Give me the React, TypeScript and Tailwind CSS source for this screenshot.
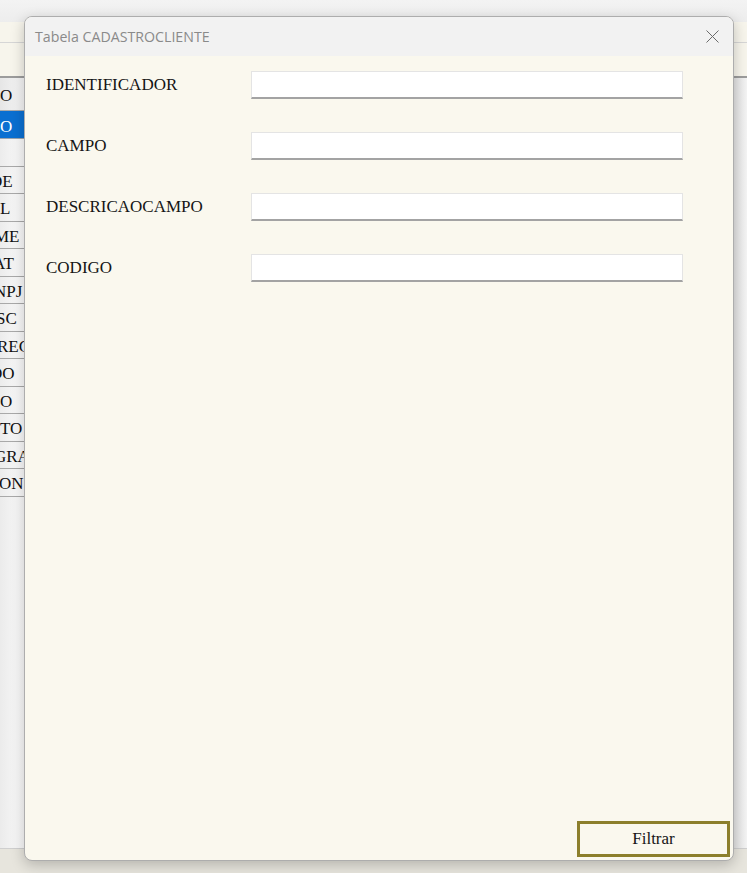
const fields = ["IDENTIFICADOR", "CAMPO", "DESCRICAOCAMPO", "CODIGO"];

// fragments of the grid behind the dialog, with how far each is pushed off the left edge
const sideRows = [
  { text: "DE", shift: "-ml-[10px]" },
  { text: "L", shift: "ml-0" },
  { text: "ME", shift: "-ml-[6px]" },
  { text: "AT", shift: "-ml-[7px]" },
  { text: "NPJ", shift: "-ml-[6px]" },
  { text: "SC", shift: "-ml-[4px]" },
  { text: "REC", shift: "-ml-[3px]" },
  { text: "DO", shift: "-ml-[10px]" },
  { text: "O", shift: "ml-0" },
  { text: "TO", shift: "ml-0" },
  { text: "GRA", shift: "-ml-[6px]" },
  { text: "ON", shift: "-ml-[1px]" },
];

const Cell: React.FC<{ text?: string; shift?: string; selected?: boolean }> = ({ text, shift, selected }) => (
  <div
    className={
      selected
        ? "flex h-[28px] shrink-0 items-center overflow-hidden border-b border-[#9aa3ad] bg-[#0a6fd1] pt-[3px] font-['Liberation_Serif',serif] text-[17px] leading-none text-white"
        : "flex h-[27.5px] shrink-0 items-center overflow-hidden border-b border-[#a9a9a9] bg-gradient-to-r from-[#ececec] to-[#fbfbfb] pt-[3px] font-['Liberation_Serif',serif] text-[17px] leading-none text-[#111]"
    }
  >
    <span className={`shrink-0 whitespace-nowrap ${shift ?? ""}`}>{text}</span>
  </div>
);

function Backdrop() {
  return (
    <div className="flex h-full w-full flex-col">
      <div className="h-[22px] shrink-0 bg-gradient-to-b from-[#f3f3f3] to-[#ededed]" />
      <div className="h-[21px] shrink-0 border-b border-[#d6d6d6] bg-[#f7f5ec]" />
      <div className="h-[35px] shrink-0 border-b-2 border-[#9c9c9c] bg-[#f7f5ec]" />
      <div className="flex min-h-0 flex-1">
        <div className="flex w-[24px] flex-col">
          <div className="flex h-[33px] shrink-0 items-center overflow-hidden border-b border-[#a9a9a9] bg-gradient-to-r from-[#e6e6e6] to-[#f6f6f6] pt-[3px] font-['Liberation_Serif',serif] text-[17px] leading-none text-[#111]">
            <span>O</span>
          </div>
          <Cell text="O" selected />
          <Cell />
          {sideRows.map((r) => (
            <Cell key={r.text + r.shift} text={r.text} shift={r.shift} />
          ))}
          <div className="flex-1 bg-gradient-to-r from-[#ebebeb] to-[#fafafa]" />
        </div>
        <div className="flex-1" />
        <div className="w-[13px] bg-gradient-to-r from-[#e2e2e2] to-[#f4f4f4]" />
      </div>
      <div className="h-[25px] shrink-0 border-t border-[#cfcfcf] bg-[#e7e5dd]" />
    </div>
  );
}

function FilterDialog() {
  return (
    <div className="absolute left-[24px] top-[16px] flex h-[845px] w-[710px] flex-col overflow-hidden rounded-[8px] border border-[#adadad] bg-[#faf8ee] shadow-[0_4px_14px_rgba(0,0,0,0.22)]">
      <div className="flex h-[39px] shrink-0 items-center justify-between bg-[#f2f2f2] pl-[10px] pr-[14px]">
        <span className="font-['Open_Sans',sans-serif] text-[14.2px] text-[#8a8a8a]">
          Tabela CADASTROCLIENTE
        </span>
        <svg width="13" height="13" viewBox="0 0 13 13" className="text-[#6b6b6b]">
          <path d="M0.5 0.5 L12.5 12.5 M12.5 0.5 L0.5 12.5" stroke="currentColor" strokeWidth="1" fill="none" />
        </svg>
      </div>
      <div className="flex flex-1 flex-col pl-[21px] pt-[15px]">
        <div className="flex flex-col gap-[33px]">
          {fields.map((f) => (
            <div key={f} className="flex h-[28px] items-center">
              <label className="-mt-[2px] w-[205px] font-['Liberation_Serif',serif] text-[17px] leading-none text-[#151515]">
                {f}
              </label>
              <input
                type="text"
                className="h-[28px] w-[432px] border border-b-2 border-[#e4e4e4] border-b-[#a3a3a3] bg-white outline-none"
              />
            </div>
          ))}
        </div>
        <div className="flex-1" />
        <div className="flex justify-end pb-[3px] pr-[3px]">
          <button className="h-[36px] w-[153px] border-[3px] border-[#8c7f2c] bg-[#faf8ee] font-['Liberation_Serif',serif] text-[17px] text-[#151515]">
            Filtrar
          </button>
        </div>
      </div>
    </div>
  );
}

export default function App() {
  return (
    <div className="relative h-[873px] w-[747px] overflow-hidden bg-white">
      <Backdrop />
      <FilterDialog />
    </div>
  );
}
